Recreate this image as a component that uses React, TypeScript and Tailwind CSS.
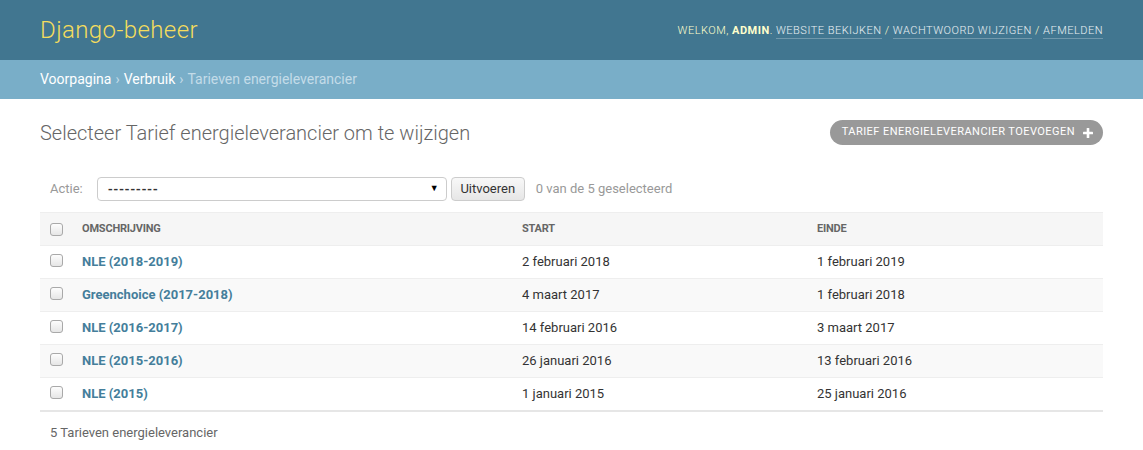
import React from 'react';

const rows = [
  { name: 'NLE (2018-2019)', start: '2 februari 2018', end: '1 februari 2019' },
  { name: 'Greenchoice (2017-2018)', start: '4 maart 2017', end: '1 februari 2018' },
  { name: 'NLE (2016-2017)', start: '14 februari 2016', end: '3 maart 2017' },
  { name: 'NLE (2015-2016)', start: '26 januari 2016', end: '13 februari 2016' },
  { name: 'NLE (2015)', start: '1 januari 2015', end: '25 januari 2016' },
];

function Checkbox() {
  return (
    <span className="block w-[13px] h-[13px] rounded-[3px] border border-[#a9a9a9] bg-gradient-to-b from-[#fdfdfd] to-[#e6e6e6]" />
  );
}

function PlusIcon() {
  return (
    <svg width="10" height="10" viewBox="0 0 10 10" className="ml-[8px]">
      <rect x="3.7" y="0" width="2.6" height="10" rx="0.6" fill="#fff" />
      <rect x="0" y="3.7" width="10" height="2.6" rx="0.6" fill="#fff" />
    </svg>
  );
}

export default function App() {
  return (
    <div className="min-h-[450px] bg-white font-['Roboto','Liberation_Sans',sans-serif] text-[13px] text-[#333]">
      {/* header */}
      <div className="h-[60px] bg-[#417690] px-[40px] flex items-center justify-between">
        <div className="text-[24px] font-light text-[#f5dd5d] leading-none tracking-[0.4px]">Django-beheer</div>
        <div className="text-[11px] tracking-[0.5px] uppercase text-[#ffc] font-light mt-[2px]">
          Welkom, <strong className="font-bold">admin</strong>.{' '}
          <a className="text-white/90 border-b border-white/25 pb-[1px]">Website bekijken</a>
          {' / '}
          <a className="text-white/90 border-b border-white/25 pb-[1px]">Wachtwoord wijzigen</a>
          {' / '}
          <a className="text-white/90 border-b border-white/25 pb-[1px]">Afmelden</a>
        </div>
      </div>

      {/* breadcrumbs */}
      <div className="h-[39px] bg-[#79aec8] px-[40px] flex items-center text-[14px] text-[#c4dce8]">
        <a className="text-white">Voorpagina</a>
        <span className="mx-[4px]">›</span>
        <a className="text-white">Verbruik</a>
        <span className="mx-[4px]">›</span>
        <span>Tarieven energieleverancier</span>
      </div>

      {/* content */}
      <div className="px-[40px] pt-[20px]">
        <div className="flex items-center justify-between h-[27px]">
          <h1 className="text-[20px] font-light text-[#666] leading-[24px]">
            Selecteer Tarief energieleverancier om te wijzigen
          </h1>
          <a className="flex items-center h-[25px] rounded-full bg-[#999] pl-[12px] pr-[10px] text-[11px] tracking-[0.45px] uppercase text-white">
            Tarief energieleverancier toevoegen
            <PlusIcon />
          </a>
        </div>

        {/* actions */}
        <div className="mt-[26px] flex items-center h-[34px] px-[10px] text-[13px]">
          <label className="text-[#999]">Actie:</label>
          <div className="ml-[14px] w-[350px] h-[24px] border border-[#ccc] rounded-[4px] flex items-center justify-between px-[10px] bg-white">
            <span className="text-[#333] font-bold tracking-[0.5px] leading-none">---------</span>
            <span className="text-[9px] text-black -mr-[3px]">▼</span>
          </div>
          <button className="ml-[4px] h-[24px] w-[74px] border border-[#ccc] rounded-[4px] bg-gradient-to-b from-[#f8f8f8] to-[#e6e6e6] text-[#333] text-[13px]">
            Uitvoeren
          </button>
          <span className="ml-[11px] text-[#999]">0 van de 5 geselecteerd</span>
        </div>

        {/* table */}
        <table className="mt-[6px] w-full border-collapse border-b-2 border-[#e6e6e6]">
          <thead>
            <tr className="bg-[#f6f6f6] border-t border-[#eee] border-b border-[#eee] h-[33px]">
              <th className="w-[32px] pl-[10px] text-left align-middle">
                <Checkbox />
              </th>
              <th className="w-[440px] pl-[10px] text-left text-[11px] font-bold uppercase text-[#666] tracking-[-0.2px]">
                Omschrijving
              </th>
              <th className="w-[295px] pl-[10px] text-left text-[11px] font-bold uppercase text-[#666] tracking-[-0.2px]">
                Start
              </th>
              <th className="pl-[10px] text-left text-[11px] font-bold uppercase text-[#666] tracking-[-0.2px]">
                Einde
              </th>
            </tr>
          </thead>
          <tbody>
            {rows.map((r, i) => (
              <tr key={r.name} className={`h-[33px] border-b border-[#eee] ${i % 2 === 1 ? 'bg-[#f9f9f9]' : 'bg-white'}`}>
                <td className="pl-[10px] align-middle">
                  <div className="-mt-[3px]">
                    <Checkbox />
                  </div>
                </td>
                <td className="pl-[10px] font-bold text-[#447e9b]">{r.name}</td>
                <td className="pl-[10px]">{r.start}</td>
                <td className="pl-[10px]">{r.end}</td>
              </tr>
            ))}
          </tbody>
        </table>

        <p className="pt-[12px] pl-[10px] text-[#666] leading-[18px]">5 Tarieven energieleverancier</p>
      </div>
    </div>
  );
}
